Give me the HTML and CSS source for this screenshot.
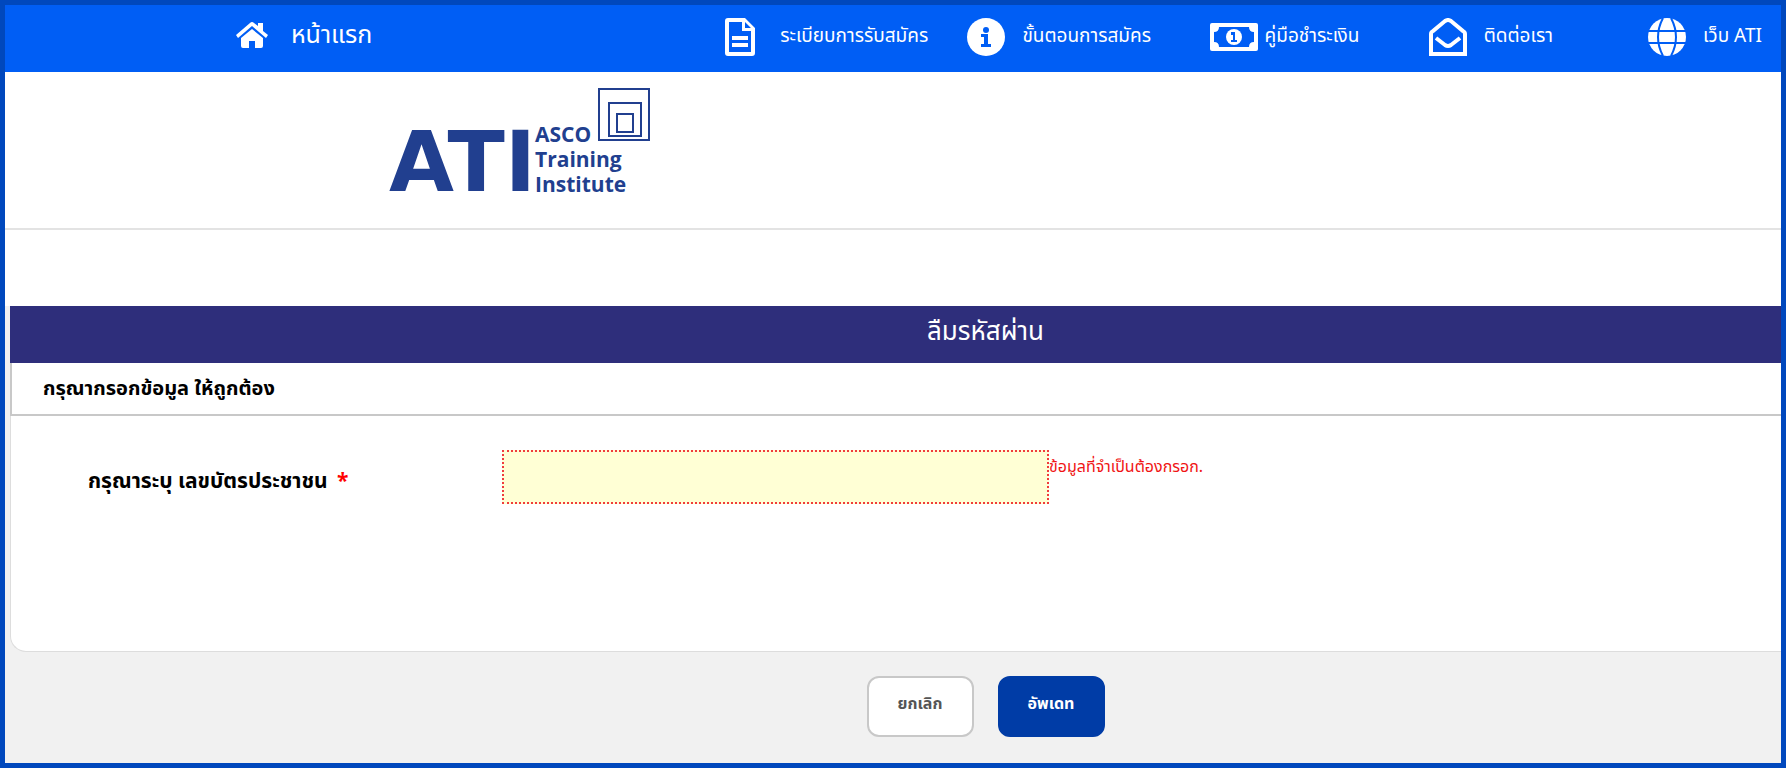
FILE: index.html
```html
<!DOCTYPE html>
<html lang="th">
<head>
    <meta charset="UTF-8">
    <meta name="viewport" content="width=device-width, initial-scale=1.0">
    <title>ลืมรหัสผ่าน - ATI</title>
    <link rel="stylesheet" href="styles.css">
</head>
<body>
    <nav class="topbar">
        <a href="#" class="home">
            <svg width="32" height="26" viewBox="0 0 32 26">
                <path d="M16 7 L27 16 V24 Q27 26 25 26 H19 V19 H13 V26 H7 Q5 26 5 24 V16 Z"/>
                <path d="M16 0 Q17 0 18 1 L22 4 V1 H27 V9 L32 13 L30 16 L16 4 L2 16 L0 13 L14 1 Q15 0 16 0 Z"/>
            </svg>
            <span>หน้าแรก</span>
        </a>
        <a href="#">
            <svg width="30" height="38" viewBox="0 0 30 38">
                <path fill-rule="evenodd" d="M3 0 H20 L30 10 V35 Q30 38 27 38 H3 Q0 38 0 35 V3 Q0 0 3 0 Z M4 4 V34 H26 V13 H17 V4 Z M20 4 V10 H26 Z"/>
                <path d="M7 18 H23 V22 H7 Z M7 25 H23 V29 H7 Z"/>
            </svg>
            <span class="gap-wide">ระเบียบการรับสมัคร</span>
        </a>
        <a href="#">
            <svg width="38" height="38" viewBox="0 0 38 38">
                <circle cx="19" cy="19" r="19"/>
                <circle class="cut" cx="19" cy="12" r="3"/>
                <path class="cut" d="M14 16 H21 V26 H24 V29 H14 V26 H17 V19 H14 Z"/>
            </svg>
            <span>ขั้นตอนการสมัคร</span>
        </a>
        <a href="#">
            <svg width="48" height="28" viewBox="0 0 48 28">
                <rect width="48" height="28" rx="2"/>
                <path class="cut" d="M9 4 H39 Q39 9 44 9 V19 Q39 19 39 24 H9 Q9 19 4 19 V9 Q9 9 9 4 Z"/>
                <ellipse cx="24" cy="14" rx="8" ry="8"/>
                <path class="cut" d="M21 9 H25 V17 H27 V19 H21 V17 H23 V12 H21 Z"/>
            </svg>
            <span class="gap-small">คู่มือชำระเงิน</span>
        </a>
        <a href="#">
            <svg width="38" height="38" viewBox="0 0 38 38">
                <path class="line" d="M2 16 Q2 14 4 13 L16 3 Q19 1 22 3 L34 13 Q36 14 36 16 V36 H2 Z"/>
                <path class="line" d="M7 20 L16 27 Q19 29 22 27 L31 20"/>
            </svg>
            <span>ติดต่อเรา</span>
        </a>
        <a href="#">
            <svg width="38" height="38" viewBox="0 0 38 38">
                <circle cx="19" cy="19" r="19"/>
                <path class="grid" d="M0 13 H38 M0 25 H38"/>
                <path class="grid" d="M15 0 Q5 19 15 38 M23 0 Q33 19 23 38"/>
            </svg>
            <span>เว็บ ATI</span>
        </a>
    </nav>

    <header class="logo-row">
        <svg class="logo" width="264" height="120" viewBox="0 0 264 120">
            <text class="logo-big" x="0" y="103">ATI</text>
            <text class="logo-small" x="146" y="54">ASCO</text>
            <text class="logo-small" x="146" y="79">Training</text>
            <text class="logo-small" x="146" y="104">Institute</text>
            <rect class="box" x="210" y="1" width="50" height="51"/>
            <rect class="box" x="220" y="15" width="32" height="33"/>
            <rect class="box" x="228" y="26" width="16" height="18"/>
        </svg>
    </header>

    <main>
        <form class="card">
            <h1>ลืมรหัสผ่าน</h1>
            <h2>กรุณากรอกข้อมูล ให้ถูกต้อง</h2>
            <div class="fields">
                <label for="idcard">กรุณาระบุ เลขบัตรประชาชน <span class="star">*</span></label>
                <input type="text" id="idcard" name="idcard">
                <span class="error">ข้อมูลที่จำเป็นต้องกรอก.</span>
            </div>
        </form>
        <div class="buttons">
            <button type="button" class="cancel">ยกเลิก</button>
            <button type="button" class="update">อัพเดท</button>
        </div>
    </main>
</body>
</html>
```
FILE: styles.css
```css
* {
    box-sizing: border-box;
}
body {
    margin: 0;
    min-height: 100vh;
    border: 5px solid #0048bd;
    background-color: #f1f1f1;
    font-family: "Noto Sans Thai", "Open Sans", sans-serif;
    display: flex;
    flex-direction: column;
}
.topbar {
    display: grid;
    grid-template-columns: 489fr 242fr 242fr 219fr 219fr 133fr;
    align-items: center;
    height: 67px;
    padding: 0 0 4px 13%;
    background-color: #005ef5;
}
.topbar a {
    display: flex;
    align-items: center;
    gap: 17px;
    color: white;
    font-size: 19px;
    line-height: 24px;
    text-decoration: none;
    white-space: nowrap;
}
.topbar .home {
    gap: 23px;
    padding-bottom: 4px;
    font-size: 25px;
}
.gap-wide {
    margin-left: 8px;
}
.gap-small {
    margin-left: -10px;
}
.topbar svg {
    flex: none;
    fill: white;
}
.topbar .cut {
    fill: #005ef5;
}
.topbar .line {
    fill: none;
    stroke: white;
    stroke-width: 4;
}
.topbar .grid {
    fill: none;
    stroke: #005ef5;
    stroke-width: 2;
}
.logo-row {
    height: 158px;
    padding: 16px 0 0 384px;
    background-color: white;
    border-bottom: 2px solid #e3e3e3;
}
.logo {
    display: block;
    overflow: visible;
    fill: #213f8f;
    font-family: "Open Sans", sans-serif;
    font-weight: 700;
}
.logo-big {
    font-family: "DejaVu Sans", sans-serif;
    font-size: 84px;
}
.logo-small {
    font-size: 21px;
}
.logo .box {
    fill: none;
    stroke: #213f8f;
    stroke-width: 2;
}
main {
    padding-left: 5px;
    border-top: 76px solid white;
}
.card {
    background-color: white;
    border: 1px solid #ddd;
    border-width: 0 0 1px 1px;
    border-bottom-left-radius: 16px;
}
h1 {
    margin: 0 0 0 -1px;
    height: 57px;
    padding-left: 180px;
    background-color: #2e2e7b;
    color: white;
    font-size: 26px;
    font-weight: 400;
    line-height: 52px;
    text-align: center;
}
h2 {
    margin: 0 0 0 -1px;
    height: 53px;
    padding-left: 31px;
    border: 1px solid #c8c8c8;
    border-width: 0 0 2px 2px;
    font-size: 20px;
    line-height: 52px;
}
.fields {
    display: flex;
    align-items: flex-start;
    height: 235px;
    padding: 34px 0 0 77px;
}
.fields label {
    width: 414px;
    font-size: 21px;
    font-weight: 700;
    line-height: 64px;
}
.star {
    margin-left: 4px;
    color: red;
}
.fields input {
    width: 547px;
    height: 54px;
    padding: 0 12px;
    border: 2px dotted #f03c3c;
    background-color: #ffffd5;
    font-size: 20px;
}
.error {
    color: #f01414;
    font-size: 16px;
    line-height: 34px;
}
.buttons {
    display: flex;
    justify-content: center;
    gap: 24px;
    padding: 24px 0 24px 180px;
}
.buttons button {
    width: 107px;
    height: 61px;
    padding-bottom: 6px;
    border: 2px solid #c8c8c8;
    border-radius: 12px;
    background-color: white;
    color: #555;
    font-family: inherit;
    font-size: 16px;
    font-weight: 700;
}
.buttons .update {
    border-color: #003ca6;
    background-color: #003ca6;
    color: white;
}
```
